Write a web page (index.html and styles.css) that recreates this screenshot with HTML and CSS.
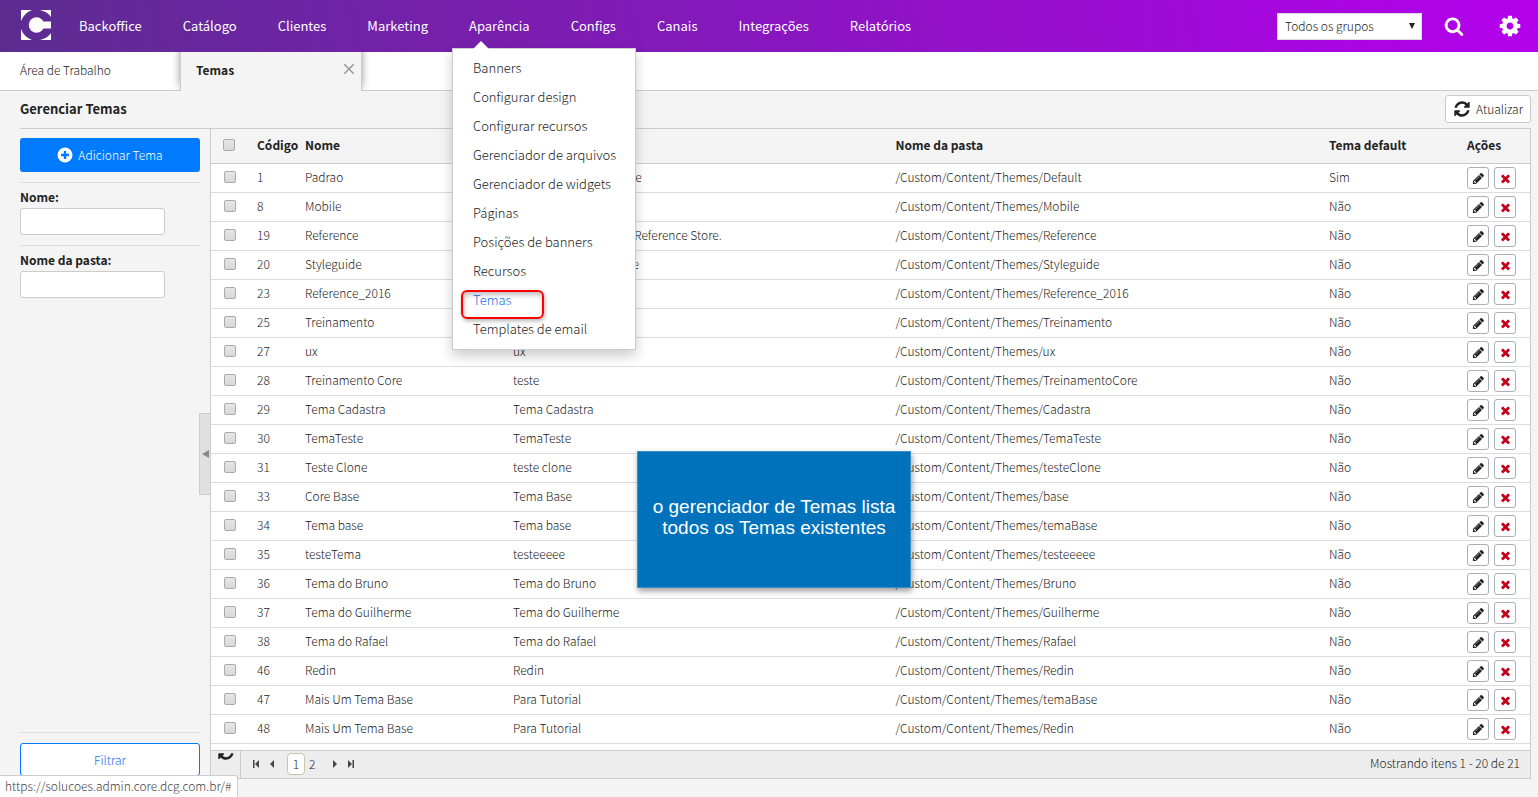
FILE: index.html
```html
<!DOCTYPE html>
<html lang="pt-BR">
<head>
<meta charset="utf-8">
<title>Gerenciar Temas</title>
<link rel="stylesheet" href="styles.css">
</head>
<body>
<svg class="sprite" aria-hidden="true">
  <symbol id="i-search" viewBox="0 0 1792 1792"><path d="M1216 832q0-185-131.500-316.500t-316.500-131.500-316.500 131.500-131.500 316.500 131.500 316.500 316.500 131.500 316.500-131.500 131.500-316.500zm512 832q0 52-38 90t-90 38q-54 0-90-38l-343-342q-179 124-399 124-143 0-273.500-55.500t-225-150-150-225-55.500-273.500 55.500-273.500 150-225 225-150 273.500-55.500 273.500 55.500 225 150 150 225 55.500 273.500q0 220-124 399l343 343q37 37 37 90z"/></symbol>
  <symbol id="i-cog" viewBox="0 0 1792 1792"><path d="M1152 896q0-106-75-181t-181-75-181 75-75 181 75 181 181 75 181-75 75-181zm512-109v222q0 12-8 23t-20 13l-185 28q-19 54-39 91 35 50 107 138 10 12 10 25t-9 23q-27 37-99 108t-94 71q-12 0-26-9l-138-108q-44 23-91 38-16 136-29 186-7 28-36 28h-222q-14 0-24.500-8.500t-11.500-21.500l-28-184q-49-16-90-37l-141 107q-10 9-25 9-14 0-25-11-126-114-165-168-7-10-7-23 0-12 8-23 15-21 51-66.500t54-70.500q-27-50-41-99l-183-27q-13-2-21-12.500t-8-23.500v-222q0-12 8-23t19-13l186-28q14-46 39-92-40-57-107-138-10-12-10-24 0-10 9-23 26-36 98.500-107.500t94.500-71.500q13 0 26 10l138 107q44-23 91-38 16-136 29-186 7-28 36-28h222q14 0 24.500 8.500t11.500 21.500l28 184q49 16 90 37l142-107q9-9 24-9 13 0 25 10 129 119 165 170 7 8 7 22 0 12-8 23-15 21-51 66.500t-54 70.500q26 50 41 98l183 28q13 2 21 12.500t8 23.500z"/></symbol>
  <symbol id="i-pencil" viewBox="0 0 1792 1792"><path d="M491 1536l91-91-235-235-91 91v107h128v128h107zm523-928q0-22-22-22-10 0-17 7l-542 542q-7 7-7 17 0 22 22 22 10 0 17-7l542-542q7-7 7-17zm-54-192l416 416-832 832h-416v-416zm683 96q0 53-37 90l-166 166-416-416 166-165q36-38 90-38 53 0 91 38l235 234q37 39 37 91z"/></symbol>
  <symbol id="i-times" viewBox="0 0 1792 1792"><path d="M1490 1322q0 40-28 68l-136 136q-28 28-68 28t-68-28l-294-294-294 294q-28 28-68 28t-68-28l-136-136q-28-28-28-68t28-68l294-294-294-294q-28-28-28-68t28-68l136-136q28-28 68-28t68 28l294 294 294-294q28-28 68-28t68 28l136 136q28 28 28 68t-28 68l-294 294 294 294q28 28 28 68z"/></symbol>
  <symbol id="i-refresh" viewBox="0 0 1792 1792"><path d="M1639 1056q0 5-1 7-64 268-268 434.500t-478 166.500q-146 0-282.500-55t-243.500-157l-129 129q-19 19-45 19t-45-19-19-45v-448q0-26 19-45t45-19h448q26 0 45 19t19 45-19 45l-137 137q71 66 161 102t187 36q134 0 250-65t186-179q11-17 53-117 8-23 30-23h192q13 0 22.500 9.500t9.500 22.500zm25-800v448q0 26-19 45t-45 19h-448q-26 0-45-19t-19-45 19-45l138-138q-148-137-349-137-134 0-250 65t-186 179q-11 17-53 117-8 23-30 23h-199q-13 0-22.500-9.500t-9.500-22.500v-7q65-268 270-434.500t480-166.500q146 0 284 55.500t245 156.500l130-129q19-19 45-19t45 19 19 45z"/></symbol>
</svg>
<div class="app">
  <header class="topbar">
    <a class="logo" href="#" aria-label="Core">
      <svg viewBox="0 0 30 30" width="30" height="30"><path fill="#fff" d="M0 0h11Q3 3 0 11zM30 0H19Q27 2 30 7zM0 30h11Q3 27 0 19zM30 30H19Q27 28 30 23z"/><circle cx="15.500" cy="15" r="7.700" fill="#fff"/><path fill="#fff" d="M15 11.500h15v7H15z"/></svg>
    </a>
    <nav class="nav">
      <ul class="nav-list">
        <li><a href="#">Backoffice</a></li>
        <li><a href="#">Catálogo</a></li>
        <li><a href="#">Clientes</a></li>
        <li><a href="#">Marketing</a></li>
        <li class="nav-open"><a href="#">Aparência</a>
          <ul class="menu">
            <li><a href="#">Banners</a></li>
            <li><a href="#">Configurar design</a></li>
            <li><a href="#">Configurar recursos</a></li>
            <li><a href="#">Gerenciador de arquivos</a></li>
            <li><a href="#">Gerenciador de widgets</a></li>
            <li><a href="#">Páginas</a></li>
            <li><a href="#">Posições de banners</a></li>
            <li><a href="#">Recursos</a></li>
            <li class="menu-current"><a href="#">Temas</a><span class="highlight"></span></li>
            <li><a href="#">Templates de email</a></li>
          </ul>
        </li>
        <li><a href="#">Configs</a></li>
        <li><a href="#">Canais</a></li>
        <li><a href="#">Integrações</a></li>
        <li><a href="#">Relatórios</a></li>
      </ul>
    </nav>
    <div class="tools">
      <div class="group-select">
        <select aria-label="Grupo"><option>Todos os grupos</option></select>
      </div>
      <button class="tool" type="button" aria-label="Buscar"><svg class="icon-20"><use href="#i-search"/></svg></button>
      <button class="tool" type="button" aria-label="Configurações"><svg class="icon-24"><use href="#i-cog"/></svg></button>
    </div>
  </header>

  <div class="tabs">
    <a class="tab" href="#">Área de Trabalho</a>
    <div class="tab tab-active"><a href="#">Temas</a>
      <button class="tab-close" type="button" aria-label="Fechar"><svg viewBox="0 0 10 10" width="10" height="10"><path d="M0 0l10 10M10 0L0 10" stroke="#999" stroke-width="1.500"/></svg></button>
    </div>
  </div>

  <div class="titlebar">
    <h1>Gerenciar Temas</h1>
    <button class="refresh" type="button"><svg class="icon-18"><use href="#i-refresh"/></svg>Atualizar</button>
  </div>

  <main class="main">
    <form class="sidebar">
      <button class="add" type="button"><svg viewBox="0 0 16 16" width="16" height="16"><circle cx="8" cy="8" r="7.500" fill="#fff"/><path d="M8 4v8M4 8h8" stroke="#007bff" stroke-width="2.400"/></svg>Adicionar Tema</button>
      <div class="field"><label for="nome">Nome:</label><input id="nome" type="text"></div>
      <div class="field"><label for="pasta">Nome da pasta:</label><input id="pasta" type="text"></div>
      <div class="filter-box"><button class="filter" type="button">Filtrar</button></div>
    </form>
    <div class="splitter"><button type="button" aria-label="Recolher"><svg viewBox="0 0 7 8" width="7" height="8"><path d="M0 4l7-4v8z" fill="#8a8a8a"/></svg></button></div>
    <section class="panel">
      <table class="grid">
        <colgroup><col class="c-check"><col class="c-code"><col class="c-name"><col class="c-desc"><col><col class="c-default"><col class="c-actions"></colgroup>
        <thead><tr><th><input type="checkbox" aria-label="Todos"></th><th>Código</th><th>Nome</th><th></th><th>Nome da pasta</th><th>Tema default</th><th>Ações</th></tr></thead>
        <tbody>
<tr><td><input type="checkbox" aria-label="1"></td><td>1</td><td>Padrao</td><td>Tema default para Store</td><td>/Custom/Content/Themes/Default</td><td>Sim</td><td><div class="acts"><button type="button" aria-label="Editar"><svg><use href="#i-pencil"/></svg></button><button class="del" type="button" aria-label="Excluir"><svg><use href="#i-times"/></svg></button></div></td></tr>
<tr><td><input type="checkbox" aria-label="8"></td><td>8</td><td>Mobile</td><td></td><td>/Custom/Content/Themes/Mobile</td><td>Não</td><td><div class="acts"><button type="button" aria-label="Editar"><svg><use href="#i-pencil"/></svg></button><button class="del" type="button" aria-label="Excluir"><svg><use href="#i-times"/></svg></button></div></td></tr>
<tr><td><input type="checkbox" aria-label="19"></td><td>19</td><td>Reference</td><td>Tema customizado da Reference Store.</td><td>/Custom/Content/Themes/Reference</td><td>Não</td><td><div class="acts"><button type="button" aria-label="Editar"><svg><use href="#i-pencil"/></svg></button><button class="del" type="button" aria-label="Excluir"><svg><use href="#i-times"/></svg></button></div></td></tr>
<tr><td><input type="checkbox" aria-label="20"></td><td>20</td><td>Styleguide</td><td>Tema para o Styleguide</td><td>/Custom/Content/Themes/Styleguide</td><td>Não</td><td><div class="acts"><button type="button" aria-label="Editar"><svg><use href="#i-pencil"/></svg></button><button class="del" type="button" aria-label="Excluir"><svg><use href="#i-times"/></svg></button></div></td></tr>
<tr><td><input type="checkbox" aria-label="23"></td><td>23</td><td>Reference_2016</td><td></td><td>/Custom/Content/Themes/Reference_2016</td><td>Não</td><td><div class="acts"><button type="button" aria-label="Editar"><svg><use href="#i-pencil"/></svg></button><button class="del" type="button" aria-label="Excluir"><svg><use href="#i-times"/></svg></button></div></td></tr>
<tr><td><input type="checkbox" aria-label="25"></td><td>25</td><td>Treinamento</td><td></td><td>/Custom/Content/Themes/Treinamento</td><td>Não</td><td><div class="acts"><button type="button" aria-label="Editar"><svg><use href="#i-pencil"/></svg></button><button class="del" type="button" aria-label="Excluir"><svg><use href="#i-times"/></svg></button></div></td></tr>
<tr><td><input type="checkbox" aria-label="27"></td><td>27</td><td>ux</td><td>ux</td><td>/Custom/Content/Themes/ux</td><td>Não</td><td><div class="acts"><button type="button" aria-label="Editar"><svg><use href="#i-pencil"/></svg></button><button class="del" type="button" aria-label="Excluir"><svg><use href="#i-times"/></svg></button></div></td></tr>
<tr><td><input type="checkbox" aria-label="28"></td><td>28</td><td>Treinamento Core</td><td>teste</td><td>/Custom/Content/Themes/TreinamentoCore</td><td>Não</td><td><div class="acts"><button type="button" aria-label="Editar"><svg><use href="#i-pencil"/></svg></button><button class="del" type="button" aria-label="Excluir"><svg><use href="#i-times"/></svg></button></div></td></tr>
<tr><td><input type="checkbox" aria-label="29"></td><td>29</td><td>Tema Cadastra</td><td>Tema Cadastra</td><td>/Custom/Content/Themes/Cadastra</td><td>Não</td><td><div class="acts"><button type="button" aria-label="Editar"><svg><use href="#i-pencil"/></svg></button><button class="del" type="button" aria-label="Excluir"><svg><use href="#i-times"/></svg></button></div></td></tr>
<tr><td><input type="checkbox" aria-label="30"></td><td>30</td><td>TemaTeste</td><td>TemaTeste</td><td>/Custom/Content/Themes/TemaTeste</td><td>Não</td><td><div class="acts"><button type="button" aria-label="Editar"><svg><use href="#i-pencil"/></svg></button><button class="del" type="button" aria-label="Excluir"><svg><use href="#i-times"/></svg></button></div></td></tr>
<tr><td><input type="checkbox" aria-label="31"></td><td>31</td><td>Teste Clone</td><td>teste clone</td><td>/Custom/Content/Themes/testeClone</td><td>Não</td><td><div class="acts"><button type="button" aria-label="Editar"><svg><use href="#i-pencil"/></svg></button><button class="del" type="button" aria-label="Excluir"><svg><use href="#i-times"/></svg></button></div></td></tr>
<tr><td><input type="checkbox" aria-label="33"></td><td>33</td><td>Core Base</td><td>Tema Base</td><td>/Custom/Content/Themes/base</td><td>Não</td><td><div class="acts"><button type="button" aria-label="Editar"><svg><use href="#i-pencil"/></svg></button><button class="del" type="button" aria-label="Excluir"><svg><use href="#i-times"/></svg></button></div></td></tr>
<tr><td><input type="checkbox" aria-label="34"></td><td>34</td><td>Tema base</td><td>Tema base</td><td>/Custom/Content/Themes/temaBase</td><td>Não</td><td><div class="acts"><button type="button" aria-label="Editar"><svg><use href="#i-pencil"/></svg></button><button class="del" type="button" aria-label="Excluir"><svg><use href="#i-times"/></svg></button></div></td></tr>
<tr><td><input type="checkbox" aria-label="35"></td><td>35</td><td>testeTema</td><td>testeeeee</td><td>/Custom/Content/Themes/testeeeee</td><td>Não</td><td><div class="acts"><button type="button" aria-label="Editar"><svg><use href="#i-pencil"/></svg></button><button class="del" type="button" aria-label="Excluir"><svg><use href="#i-times"/></svg></button></div></td></tr>
<tr><td><input type="checkbox" aria-label="36"></td><td>36</td><td>Tema do Bruno</td><td>Tema do Bruno</td><td>/Custom/Content/Themes/Bruno</td><td>Não</td><td><div class="acts"><button type="button" aria-label="Editar"><svg><use href="#i-pencil"/></svg></button><button class="del" type="button" aria-label="Excluir"><svg><use href="#i-times"/></svg></button></div></td></tr>
<tr><td><input type="checkbox" aria-label="37"></td><td>37</td><td>Tema do Guilherme</td><td>Tema do Guilherme</td><td>/Custom/Content/Themes/Guilherme</td><td>Não</td><td><div class="acts"><button type="button" aria-label="Editar"><svg><use href="#i-pencil"/></svg></button><button class="del" type="button" aria-label="Excluir"><svg><use href="#i-times"/></svg></button></div></td></tr>
<tr><td><input type="checkbox" aria-label="38"></td><td>38</td><td>Tema do Rafael</td><td>Tema do Rafael</td><td>/Custom/Content/Themes/Rafael</td><td>Não</td><td><div class="acts"><button type="button" aria-label="Editar"><svg><use href="#i-pencil"/></svg></button><button class="del" type="button" aria-label="Excluir"><svg><use href="#i-times"/></svg></button></div></td></tr>
<tr><td><input type="checkbox" aria-label="46"></td><td>46</td><td>Redin</td><td>Redin</td><td>/Custom/Content/Themes/Redin</td><td>Não</td><td><div class="acts"><button type="button" aria-label="Editar"><svg><use href="#i-pencil"/></svg></button><button class="del" type="button" aria-label="Excluir"><svg><use href="#i-times"/></svg></button></div></td></tr>
<tr><td><input type="checkbox" aria-label="47"></td><td>47</td><td>Mais Um Tema Base</td><td>Para Tutorial</td><td>/Custom/Content/Themes/temaBase</td><td>Não</td><td><div class="acts"><button type="button" aria-label="Editar"><svg><use href="#i-pencil"/></svg></button><button class="del" type="button" aria-label="Excluir"><svg><use href="#i-times"/></svg></button></div></td></tr>
<tr><td><input type="checkbox" aria-label="48"></td><td>48</td><td>Mais Um Tema Base</td><td>Para Tutorial</td><td>/Custom/Content/Themes/Redin</td><td>Não</td><td><div class="acts"><button type="button" aria-label="Editar"><svg><use href="#i-pencil"/></svg></button><button class="del" type="button" aria-label="Excluir"><svg><use href="#i-times"/></svg></button></div></td></tr>
        </tbody>
      </table>
      <footer class="pager">
        <button class="reload" type="button" aria-label="Recarregar"><svg class="icon-18"><use href="#i-refresh"/></svg></button>
        <div class="pages">
          <button type="button" aria-label="Primeira"><svg viewBox="0 0 8 8" width="8" height="8"><path d="M1 0h1.500v8H1zM7 0v8L3 4z"/></svg></button>
          <button type="button" aria-label="Anterior"><svg viewBox="0 0 8 8" width="8" height="8"><path d="M6 0v8L2 4z"/></svg></button>
          <span class="page-current">1</span>
          <a class="page" href="#">2</a>
          <button type="button" aria-label="Próxima"><svg viewBox="0 0 8 8" width="8" height="8"><path d="M2 0v8l4-4z"/></svg></button>
          <button type="button" aria-label="Última"><svg viewBox="0 0 8 8" width="8" height="8"><path d="M5.500 0H7v8H5.500zM1 0v8l4-4z"/></svg></button>
        </div>
        <span class="summary">Mostrando itens 1 - 20 de 21</span>
      </footer>
    </section>
  </main>
</div>
<div class="note">o gerenciador de Temas lista todos os Temas existentes</div>
<div class="status">https://solucoes.admin.core.dcg.com.br/#</div>
</body>
</html>
```

FILE: styles.css
```css
* { box-sizing: border-box; }
body {
  margin: 0;
  background: #f4f4f4;
  color: #222;
  font: 12px/20px "Noto Sans CJK SC", "Open Sans", sans-serif;
  font-weight: 300;
}
button, input, select { font: inherit; color: inherit; margin: 0; }
button { background: none; border: 0; padding: 0; cursor: pointer; }
a { color: inherit; text-decoration: none; }
ul { list-style: none; margin: 0; padding: 0; }
svg { display: block; fill: currentColor; }
.sprite { position: absolute; width: 0; height: 0; }
.icon-18 { width: 18px; height: 18px; }
.icon-20 { width: 20px; height: 20px; }
.icon-24 { width: 24px; height: 24px; }
.app { display: flex; flex-direction: column; min-height: 100vh; padding-bottom: 18px; }

.topbar {
  display: flex;
  align-items: center;
  height: 52px;
  padding: 0 16px 0 21px;
  background: linear-gradient(80deg, #5c2d91, #b400ec);
  color: #fff;
}
.logo { margin: 0 28px 2px 0; }
.nav { flex: 1; }
.nav-list { display: flex; gap: 41px; font-size: 13px; font-weight: 400; }
.nav-open { position: relative; }
.menu {
  position: absolute;
  z-index: 5;
  top: 32px;
  left: -17px;
  width: 184px;
  padding: 4px 0 6px;
  background: #fff;
  border: 1px solid #ccc;
  box-shadow: 0 6px 12px rgba(0, 0, 0, .2);
  color: #222;
  font-size: 13px;
  font-weight: 300;
  line-height: 29px;
}
.menu::before {
  content: "";
  position: absolute;
  top: -8px;
  left: 20px;
  border: 8px solid transparent;
  border-top: 0;
  border-bottom-color: #fff;
}
.menu a { display: block; padding-left: 20px; }
.menu-current { position: relative; color: #2070f5; }
.highlight {
  position: absolute;
  top: 5px;
  left: 8px;
  width: 83px;
  height: 29px;
  border: 2px solid #f00;
  border-radius: 6px;
  box-shadow: 1px 2px 4px rgba(0, 0, 0, .3), inset 1px 3px 5px rgba(0, 0, 0, .25);
}
.tools { display: flex; align-items: center; gap: 22px; }
.group-select { position: relative; }
.group-select select {
  display: block;
  width: 145px;
  height: 27px;
  padding: 0 7px;
  appearance: none;
  background: #fff;
  border: 1px solid #ddd;
  border-radius: 0;
  color: #222;
}
.group-select::after {
  content: "";
  position: absolute;
  top: 10px;
  right: 7px;
  border: 3px solid transparent;
  border-top: 6px solid #222;
  border-bottom: 0;
}
.tool + .tool { margin-left: 12px; }

.tabs { display: flex; height: 39px; background: #fff; border-bottom: 1px solid #ccc; }
.tab { width: 180px; padding: 8px 20px; }
.tab-active {
  display: flex;
  justify-content: space-between;
  width: 182px;
  height: 39px;
  padding: 8px 7px 8px 15px;
  background: #f4f4f4;
  border: solid #ccc;
  border-width: 0 1px;
  box-shadow: 0 -4px 8px rgba(0, 0, 0, .4);
  clip-path: inset(0 -10px 0 -10px);
  font-weight: 700;
}
.tab-close { height: 18px; }

.titlebar {
  display: flex;
  align-items: center;
  justify-content: space-between;
  height: 38px;
  margin: 0 7px 0 20px;
  padding-bottom: 2px;
  border-bottom: 1px solid #ccc;
}
h1 { margin: 0; font-size: 13px; font-weight: 700; }
.refresh {
  display: flex;
  align-items: center;
  gap: 5px;
  height: 28px;
  padding: 0 7px;
  background: #fff;
  border: 1px solid #ccc;
  border-radius: 3px;
}

.main { display: flex; flex: 1; padding: 0 7px 0 20px; }
.sidebar { display: flex; flex-direction: column; width: 180px; padding: 9px 0 3px; }
.add {
  display: flex;
  align-items: center;
  justify-content: center;
  gap: 5px;
  height: 34px;
  margin-bottom: 10px;
  background: #007bff;
  border-radius: 3px;
  color: #fff;
}
.field { height: 63px; padding-top: 4px; border-top: 1px solid #ddd; }
.field label { display: block; font-weight: 700; }
.field input {
  display: block;
  width: 145px;
  height: 27px;
  margin-top: 1px;
  padding: 0 6px;
  background: #fff;
  border: 1px solid #ccc;
  border-radius: 3px;
}
.filter-box { margin-top: auto; padding-top: 10px; border-top: 1px solid #ddd; }
.filter {
  width: 100%;
  height: 33px;
  background: #fff;
  border: 1px solid #007bff;
  border-radius: 3px;
  color: #2070f5;
}
.splitter { display: flex; align-items: center; width: 10px; }
.splitter button {
  display: flex;
  align-items: center;
  justify-content: center;
  flex: none;
  width: 11px;
  height: 82px;
  margin-left: -1px;
  background: #e0e0e0;
  border: 1px solid #ccc;
  border-right: 0;
}

.panel {
  display: flex;
  flex: 1;
  flex-direction: column;
  min-width: 0;
  background: #fff;
  border: solid #ccc;
  border-width: 0 1px 1px;
}
.grid { width: 100%; table-layout: fixed; border-collapse: separate; border-spacing: 0; }
.c-check { width: 40px; }
.c-code { width: 48px; }
.c-name { width: 208px; }
.c-desc { width: 29%; }
.c-default { width: 138px; }
.c-actions { width: 69px; }
.grid th, .grid td { padding: 0 0 0 6px; text-align: left; white-space: nowrap; }
.grid th {
  height: 35px;
  padding-bottom: 2px;
  background: #f4f4f4;
  border-bottom: 1px solid #ccc;
  font-weight: 700;
}
.grid td { height: 29px; padding-bottom: 2px; border-bottom: 1px solid #ddd; }
.grid th:first-child { padding-left: 12px; }
.grid td:first-child { padding-left: 13px; }
.grid input {
  display: block;
  width: 12px;
  height: 12px;
  appearance: none;
  background: linear-gradient(#e6e6e6, #d8d8d8);
  border: 1px solid #aaa;
  border-radius: 2px;
}
.grid td:last-child { padding-bottom: 0; }
.acts { display: flex; gap: 5px; }
.acts button {
  display: flex;
  align-items: center;
  justify-content: center;
  width: 22px;
  height: 22px;
  background: #fff;
  border: 1px solid #a9b0b7;
  border-radius: 3px;
}
.acts svg { width: 13px; height: 13px; }
.acts .del { color: #c4001a; }

.pager {
  display: flex;
  align-items: stretch;
  height: 28px;
  margin-top: auto;
  background: #ededed;
  border-top: 1px solid #ccc;
}
.reload {
  display: flex;
  align-items: flex-end;
  justify-content: center;
  width: 30px;
  padding-bottom: 17px;
  overflow: hidden;
  border-right: 1px solid #ccc;
}
.reload svg { flex: none; }
.pages { display: flex; flex: 1; align-items: center; gap: 8px; padding: 0 0 1px 11px; color: #444; }
.page-current {
  width: 18px;
  margin-left: 3px;
  text-align: center;
  background: #fff;
  border: 1px solid #c5c8a8;
  border-radius: 4px;
  color: #222;
}
.page { margin: 0 8px 0 -4px; color: #222; }
.summary { padding: 2px 10px 0 0; }

.note {
  position: absolute;
  top: 451px;
  left: 637px;
  display: flex;
  align-items: center;
  width: 274px;
  height: 137px;
  padding: 0 12px 6px;
  background: #0072bc;
  border: 1px solid #3d8fc6;
  box-shadow: 1px 3px 6px rgba(0, 0, 0, .4);
  color: #fff;
  font: 19px/21px "Liberation Sans", Arial, sans-serif;
  text-align: center;
}
.status {
  position: fixed;
  bottom: 0;
  left: 0;
  padding: 0 6px 1px 5px;
  background: #fff;
  border: 1px solid #ccc;
  border-width: 1px 1px 0 0;
  border-top-right-radius: 3px;
  color: #444;
}
```
